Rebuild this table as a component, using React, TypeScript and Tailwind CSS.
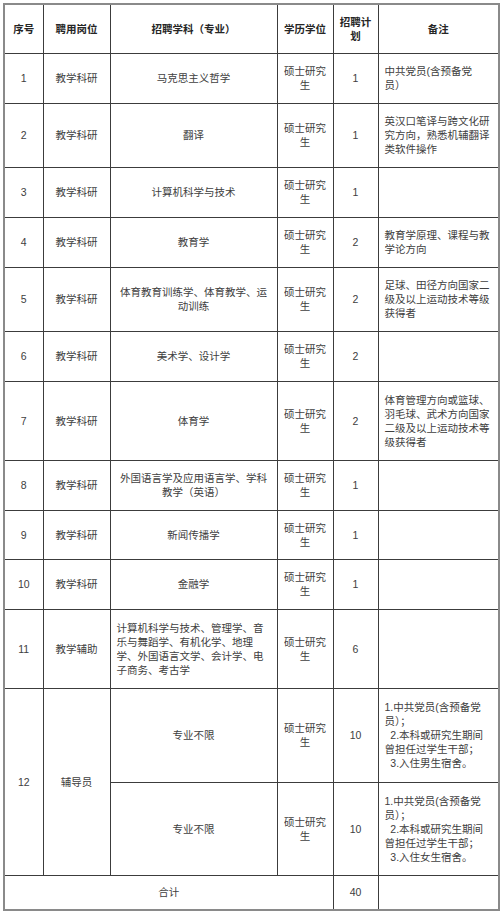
import React from 'react';

type Row = {
    no: string;
    post: string;
    subject: string[];
    subjectLeft?: boolean;
    plan: string;
    remark: string[];
    h: number;
};

const rows: Row[] = [
    { no: '1', post: '教学科研', subject: ['马克思主义哲学'], plan: '1', remark: ['中共党员(含预备党', '员）'], h: 50 },
    { no: '2', post: '教学科研', subject: ['翻译'], plan: '1', remark: ['英汉口笔译与跨文化研', '究方向，熟悉机辅翻译', '类软件操作'], h: 64 },
    { no: '3', post: '教学科研', subject: ['计算机科学与技术'], plan: '1', remark: [], h: 50 },
    { no: '4', post: '教学科研', subject: ['教育学'], plan: '2', remark: ['教育学原理、课程与教', '学论方向'], h: 50 },
    { no: '5', post: '教学科研', subject: ['体育教育训练学、体育教学、运', '动训练'], plan: '2', remark: ['足球、田径方向国家二', '级及以上运动技术等级', '获得者'], h: 64 },
    { no: '6', post: '教学科研', subject: ['美术学、设计学'], plan: '2', remark: [], h: 50 },
    { no: '7', post: '教学科研', subject: ['体育学'], plan: '2', remark: ['体育管理方向或篮球、', '羽毛球、武术方向国家', '二级及以上运动技术等', '级获得者'], h: 79 },
    { no: '8', post: '教学科研', subject: ['外国语言学及应用语言学、学科', '教学（英语）'], plan: '1', remark: [], h: 50 },
    { no: '9', post: '教学科研', subject: ['新闻传播学'], plan: '1', remark: [], h: 49 },
    { no: '10', post: '教学科研', subject: ['金融学'], plan: '1', remark: [], h: 50 },
    {
        no: '11',
        post: '教学辅助',
        subject: ['计算机科学与技术、管理学、音', '乐与舞蹈学、有机化学、地理', '学、外国语言文学、会计学、电', '子商务、考古学'],
        subjectLeft: true,
        plan: '6',
        remark: [],
        h: 79,
    },
];

const cell = 'border border-[#3c3c3c] align-middle text-center p-0';

const Lines: React.FC<{ lines: string[] }> = ({ lines }) => (
    <>
        {lines.map((l, i) => (
            <div key={i} className="whitespace-pre">
                {l}
            </div>
        ))}
    </>
);

const Degree = () => (
    <div className="leading-[14px]">
        <div>硕士研究</div>
        <div>生</div>
    </div>
);

const counselorRemark = (dorm: string) => [
    '1.中共党员(含预备党',
    '员）；',
    '  2.本科或研究生期间',
    '曾担任过学生干部；',
    `  3.入住${dorm}生宿舍。`,
];

export default function App() {
    return (
        <div
            className="w-[500px] h-[914px] bg-white pt-[3px] pl-[3px] text-[#404040] text-[10.5px] leading-[14px]"
            style={{ fontFamily: '"Liberation Sans", "Noto Sans CJK SC", sans-serif' }}
        >
            <table className="table-fixed border-collapse w-[495px] border-2 border-[#8a8a8a]">
                <colgroup>
                    <col className="w-[39px]" />
                    <col className="w-[67px]" />
                    <col className="w-[167px]" />
                    <col className="w-[56px]" />
                    <col className="w-[45px]" />
                    <col className="w-[121px]" />
                </colgroup>
                <thead>
                    <tr className="font-bold text-[#262626]">
                        <td className={`${cell} h-[49px]`}>序号</td>
                        <td className={cell}>聘用岗位</td>
                        <td className={cell}>招聘学科（专业）</td>
                        <td className={cell}>学历学位</td>
                        <td className={cell}>
                            <div>招聘计</div>
                            <div>划</div>
                        </td>
                        <td className={cell}>备注</td>
                    </tr>
                </thead>
                <tbody>
                    {rows.map((r) => (
                        <tr key={r.no}>
                            <td className={cell} style={{ height: r.h }}>
                                {r.no}
                            </td>
                            <td className={cell}>{r.post}</td>
                            <td className={`${cell} ${r.subjectLeft ? 'text-left px-[6px]' : 'px-[8px]'}`}>
                                <Lines lines={r.subject} />
                            </td>
                            <td className={cell}>
                                <Degree />
                            </td>
                            <td className={cell}>{r.plan}</td>
                            <td className={`${cell} text-left px-[6px]`}>
                                <Lines lines={r.remark} />
                            </td>
                        </tr>
                    ))}
                    <tr>
                        <td className={cell} rowSpan={2}>
                            12
                        </td>
                        <td className={cell} rowSpan={2}>
                            辅导员
                        </td>
                        <td className={`${cell} h-[94px]`}>专业不限</td>
                        <td className={cell}>
                            <Degree />
                        </td>
                        <td className={cell}>10</td>
                        <td className={`${cell} text-left px-[6px]`}>
                            <Lines lines={counselorRemark('男')} />
                        </td>
                    </tr>
                    <tr>
                        <td className={`${cell} h-[93px]`}>专业不限</td>
                        <td className={cell}>
                            <Degree />
                        </td>
                        <td className={cell}>10</td>
                        <td className={`${cell} text-left px-[6px]`}>
                            <Lines lines={counselorRemark('女')} />
                        </td>
                    </tr>
                    <tr>
                        <td className={`${cell} h-[35px]`} colSpan={4}>
                            合计
                        </td>
                        <td className={cell}>40</td>
                        <td className={cell}></td>
                    </tr>
                </tbody>
            </table>
        </div>
    );
}
